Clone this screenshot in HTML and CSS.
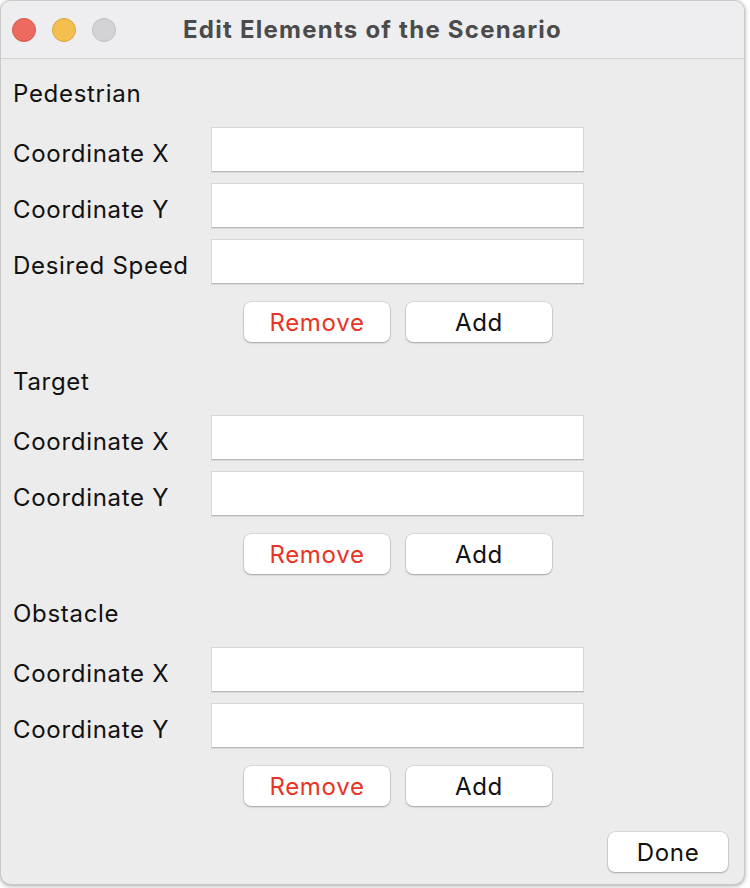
FILE: index.html
```html
<!DOCTYPE html>
<html>
<head>
<meta charset="utf-8">
<link rel="stylesheet" href="styles.css">
</head>
<body>
<div class="window">
  <div class="titlebar">
    <div class="lights">
      <span class="light red"></span>
      <span class="light yellow"></span>
      <span class="light gray"></span>
    </div>
    <div class="title">Edit Elements of the Scenario</div>
  </div>
  <div class="content">
    <div class="section">
      <div class="heading">Pedestrian</div>
      <div class="rows">
        <div class="row"><span class="label">Coordinate X</span><div class="field"></div></div>
        <div class="row"><span class="label">Coordinate Y</span><div class="field"></div></div>
        <div class="row"><span class="label">Desired Speed</span><div class="field"></div></div>
      </div>
      <div class="buttons">
        <button class="btn remove">Remove</button>
        <button class="btn">Add</button>
      </div>
    </div>
    <div class="section">
      <div class="heading">Target</div>
      <div class="rows">
        <div class="row"><span class="label">Coordinate X</span><div class="field"></div></div>
        <div class="row"><span class="label">Coordinate Y</span><div class="field"></div></div>
      </div>
      <div class="buttons">
        <button class="btn remove">Remove</button>
        <button class="btn">Add</button>
      </div>
    </div>
    <div class="section">
      <div class="heading">Obstacle</div>
      <div class="rows">
        <div class="row"><span class="label">Coordinate X</span><div class="field"></div></div>
        <div class="row"><span class="label">Coordinate Y</span><div class="field"></div></div>
      </div>
      <div class="buttons">
        <button class="btn remove">Remove</button>
        <button class="btn">Add</button>
      </div>
    </div>
    <div class="footer">
      <button class="btn done">Done</button>
    </div>
  </div>
</div>
</body>
</html>
```

FILE: styles.css
```css
* { box-sizing: border-box; }
html, body {
  margin: 0;
  padding: 0;
  background: #ffffff;
  width: 750px;
  height: 888px;
  overflow: hidden;
}
body {
  font-family: Inter, "Noto Sans", "Liberation Sans", sans-serif;
  color: #111111;
}
.window {
  width: 745px;
  height: 885px;
  background: #ececec;
  border: 1px solid #c9c9c9;
  border-radius: 11px;
  box-shadow: 0 1px 4px rgba(0,0,0,0.35);
  overflow: hidden;
  display: flex;
  flex-direction: column;
}
.titlebar {
  height: 58px;
  flex: none;
  background: #eeeef0;
  border-bottom: 1px solid #d3d3d3;
  display: flex;
  align-items: center;
  position: relative;
}
.lights {
  display: flex;
  gap: 16px;
  padding-left: 11px;
  padding-top: 1px;
}
.light {
  width: 24px;
  height: 24px;
  border-radius: 50%;
  display: block;
}
.light.red { background: #ed6a5e; border: 1px solid #d35449; }
.light.yellow { background: #f5bf4f; border: 1px solid #d9a53f; }
.light.gray { background: #d3d3d5; border: 1px solid #c0c0c2; }
.title {
  position: absolute;
  left: 0;
  right: 0;
  top: 0;
  height: 57px;
  line-height: 57px;
  text-align: center;
  font-weight: 700;
  font-size: 24px;
  letter-spacing: 1.25px;
  color: #4b4b4b;
  pointer-events: none;
}
.content {
  padding: 21px 16px 0 12px;
  display: flex;
  flex-direction: column;
}
.section {
  display: flex;
  flex-direction: column;
  margin-bottom: 26px;
}
.heading {
  height: 26px;
  line-height: 28px;
  font-size: 24px;
  letter-spacing: 0.7px;
  margin-bottom: 21px;
}
.rows {
  display: flex;
  flex-direction: column;
  gap: 11px;
}
.row {
  display: flex;
  align-items: center;
  height: 45px;
}
.label {
  width: 198px;
  flex: none;
  font-size: 24px;
  letter-spacing: 0.7px;
  padding-top: 7px;
  white-space: nowrap;
}
.field {
  width: 373px;
  height: 45px;
  background: #ffffff;
  border: 1px solid #d8d8d8;
  border-bottom: 1px solid #b8b8b8;
  box-shadow: 0 1px 0 rgba(0,0,0,0.08);
}
.buttons {
  margin-top: 18px;
  margin-left: 198px;
  width: 373px;
  display: flex;
  justify-content: center;
  gap: 16px;
  padding-left: 1px;
}
.btn {
  width: 146px;
  height: 40px;
  border: none;
  border-radius: 7px;
  background: #ffffff;
  box-shadow: 0 0 0 0.5px rgba(0,0,0,0.16), 0 1px 2px rgba(0,0,0,0.25);
  font-family: Inter, "Noto Sans", "Liberation Sans", sans-serif;
  font-size: 24px;
  letter-spacing: 0.7px;
  color: #111111;
  padding: 0;
}
.btn.remove { color: #ea3323; }
.footer {
  display: flex;
  justify-content: flex-end;
}
.btn.done {
  width: 120px;
}
```
